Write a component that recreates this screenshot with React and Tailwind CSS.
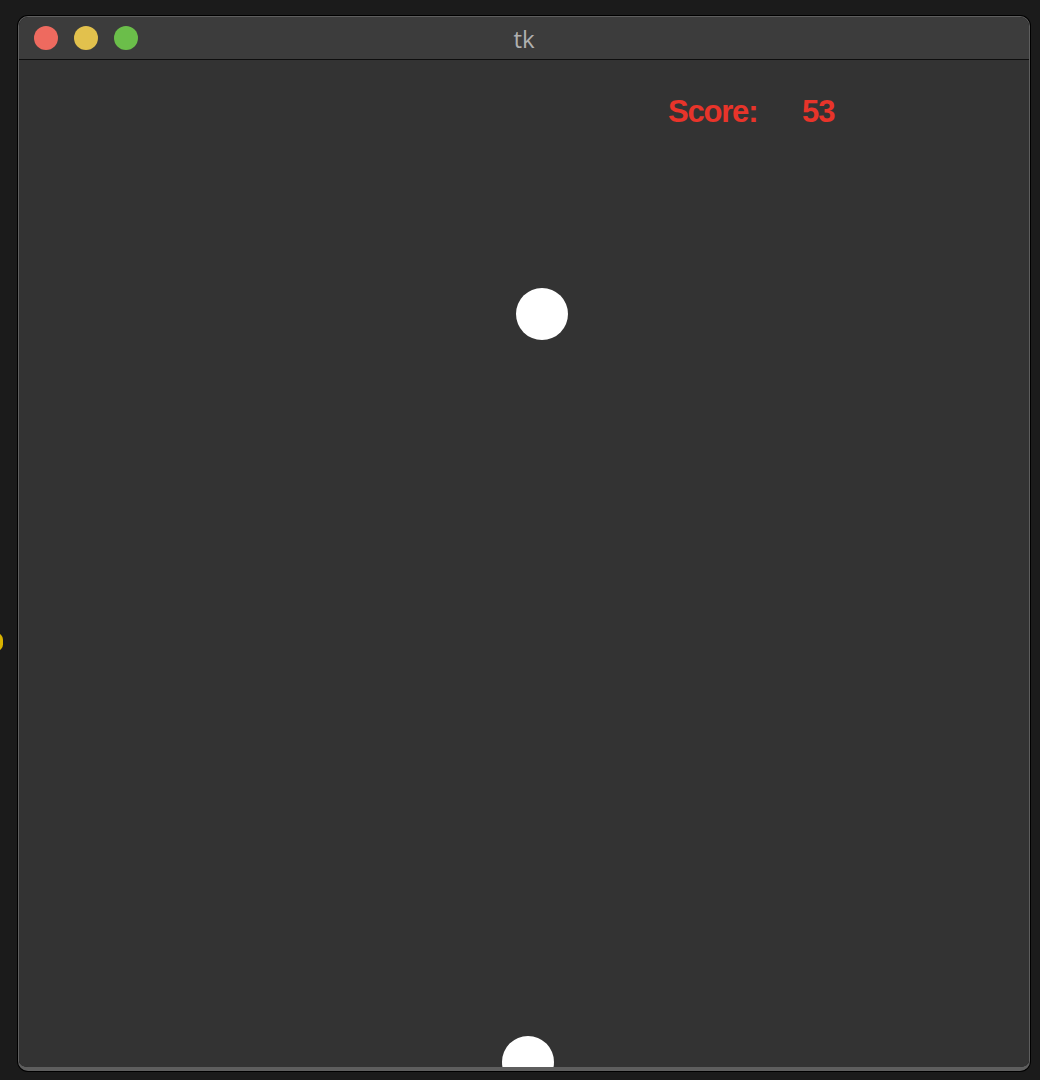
export default function App() {
  return (
    <div className="relative h-[1080px] w-[1040px] overflow-hidden bg-[#1b1b1b]" style={{ fontFamily: '"Liberation Sans", Arial, sans-serif' }}>
      {/* sliver of another window's control peeking in at the left edge */}
      <div className="absolute left-[-10px] top-[633px] h-[18px] w-[13px] rounded-full bg-[#d9b300]" />

      <div className="absolute left-[18px] top-[16px] flex h-[1055px] w-[1012px] flex-col overflow-hidden rounded-[10px] border border-b-4 border-[#5e5e5e] shadow-[0_0_0_1px_#000]">
        <header className="relative flex h-[43px] shrink-0 items-center border-b border-[#0e0e0e] bg-[#3c3c3c]">
          <div className="flex items-center gap-4 pl-[15px]">
            <span className="h-6 w-6 rounded-full bg-[#ee6a5f]" />
            <span className="h-6 w-6 rounded-full bg-[#e2c14d]" />
            <span className="h-6 w-6 rounded-full bg-[#6bbe4a]" />
          </div>
          <div className="absolute inset-0 flex items-center justify-center pt-[2px] text-[24px] text-[#b0b0b0]" style={{ fontFamily: '"Open Sans", "Liberation Sans", sans-serif' }}>
            tk
          </div>
        </header>

        <main className="relative flex-1 overflow-hidden bg-[#333333]">
          <span className="absolute left-[649px] top-[36px] text-[31px] font-bold leading-none tracking-[-1.2px] text-[#e8342a]">Score:</span>
          <span className="absolute left-[783px] top-[36px] text-[31px] font-bold leading-none tracking-[-1px] text-[#e8342a]">53</span>

          <div className="absolute left-[497px] top-[228px] h-[52px] w-[52px] rounded-full bg-white" />
          <div className="absolute left-[483px] top-[976px] h-[52px] w-[52px] rounded-full bg-white" />
        </main>
      </div>
    </div>
  )
}
